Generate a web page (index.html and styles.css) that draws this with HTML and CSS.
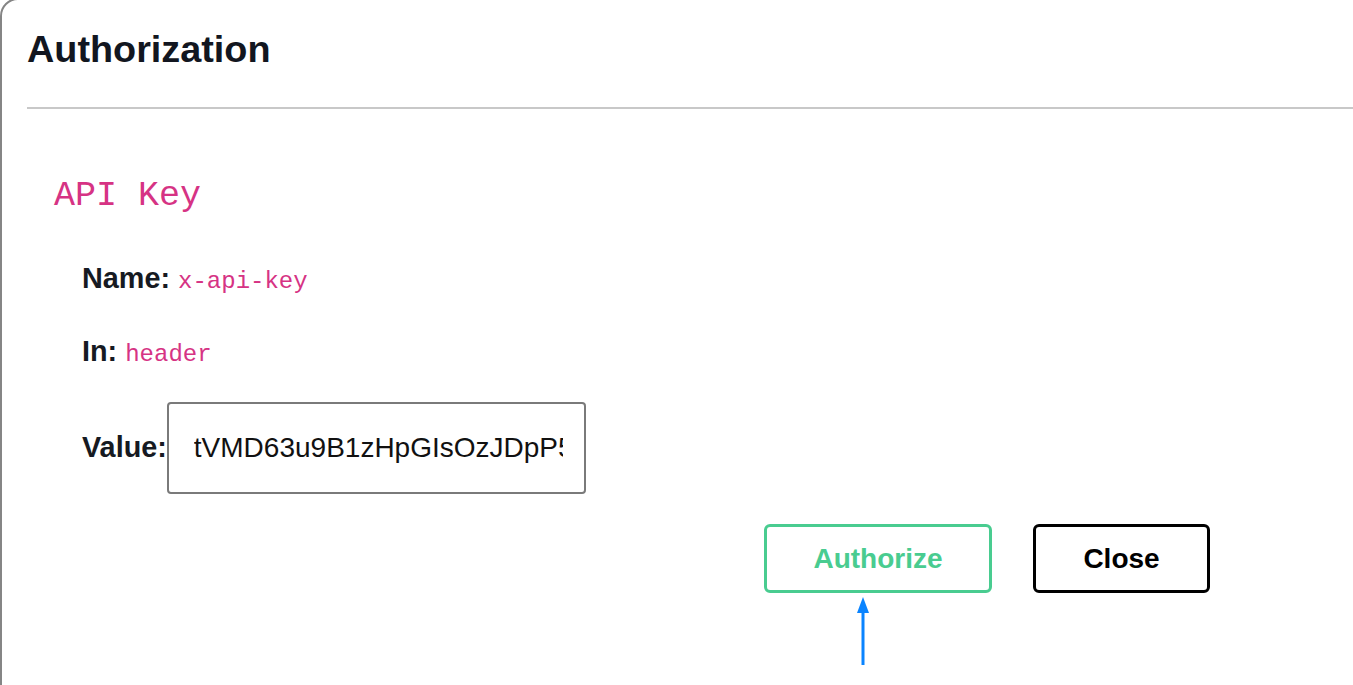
FILE: index.html
```html
<!DOCTYPE html>
<html lang="en">
<head>
<meta charset="utf-8">
<title>Authorization</title>
<link rel="stylesheet" href="styles.css">
</head>
<body>
<div class="modal">
  <div class="modal-header">
    <h2 class="modal-title">Authorization</h2>
  </div>
  <div class="modal-body">
    <h4 class="scheme-title">API Key</h4>
    <div class="field"><span class="field-label">Name:</span> <code class="field-code">x-api-key</code></div>
    <div class="field field-in"><span class="field-label">In:</span> <code class="field-code">header</code></div>
    <div class="field field-value">
      <label class="field-label" for="apikey">Value:</label>
      <input id="apikey" class="value-input" type="text" value="tVMD63u9B1zHpGIsOzJDpP5xK2mQ">
    </div>
    <div class="actions">
      <button class="btn btn-authorize">Authorize</button>
      <button class="btn btn-close">Close</button>
    </div>
  </div>
  <svg class="pointer" width="14" height="70" viewBox="0 0 14 70">
    <path d="M7 1 L13 17 L1 17 Z" fill="#0a84ff"/>
    <rect x="5.5" y="14" width="3" height="55" fill="#0a84ff"/>
  </svg>
</div>
</body>
</html>
```
FILE: styles.css
```css
html, body {
  margin: 0;
  padding: 0;
  overflow: hidden;
  background: #ffffff;
}
body {
  font-family: "Liberation Sans", Arial, sans-serif;
  color: #1a1d26;
}
.modal {
  position: relative;
  margin-top: -2px;
  width: 1420px;
  height: 740px;
  border: 2px solid #858585;
  border-radius: 18px 0 0 0;
  box-sizing: border-box;
  background: #fff;
}
.modal-header {
  margin-left: 25px;
  padding: 27px 0 35px 0;
  border-bottom: 2px solid #c8c8c8;
}
.modal-title {
  margin: 0;
  font-size: 37.8px;
  line-height: 45px;
  font-weight: 700;
  color: #121620;
}
.modal-body {
  padding-left: 52px;
}
.scheme-title {
  margin: 66px 0 0 0;
  font-family: "Liberation Mono", "Courier New", monospace;
  font-weight: 400;
  font-size: 35px;
  line-height: 42px;
  color: #d63384;
}
.field {
  margin-left: 28px;
  font-size: 28.8px;
  line-height: 36px;
}
.scheme-title + .field {
  margin-top: 43px;
}
.field-in {
  margin-top: 33px;
}
.field-label {
  font-weight: 700;
  color: #161a22;
}
.field-code {
  font-family: "Liberation Mono", "Courier New", monospace;
  font-size: 24px;
  color: #d63384;
}
.field-value {
  display: flex;
  align-items: baseline;
  margin-top: 29px;
}
.value-input {
  width: 419px;
  height: 92px;
  box-sizing: border-box;
  border: 2px solid #7a7a7a;
  border-radius: 4px;
  padding: 0 21px 0 25px;
  font-family: "Liberation Sans", Arial, sans-serif;
  font-size: 28px;
  color: #111;
  background: #fff;
  outline: none;
}
.actions {
  display: flex;
  gap: 41px;
  margin-top: 30px;
  padding-left: 710px;
}
.btn {
  height: 69px;
  box-sizing: border-box;
  border-radius: 6px;
  background: #fff;
  font-family: "Liberation Sans", Arial, sans-serif;
  font-size: 28px;
  font-weight: 700;
  padding: 0;
  cursor: pointer;
}
.btn-authorize {
  width: 228px;
  border: 3px solid #49cc90;
  color: #49cc90;
}
.btn-close {
  width: 177px;
  border: 3px solid #000;
  color: #000;
}
.pointer {
  position: absolute;
  left: 854px;
  top: 596px;
}
```
